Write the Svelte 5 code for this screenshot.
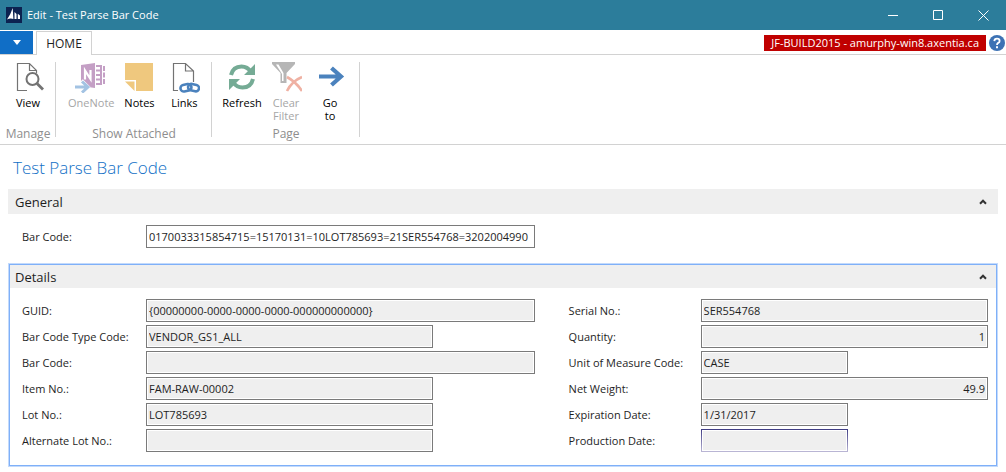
<script lang="ts">
	type Width = 'full' | 'medium' | 'small';

	interface Field {
		id: string;
		label: string;
		value: string;
		width: Width;
		numeric?: boolean;
		active?: boolean;
	}

	let barCode = $state('0170033315854715=15170131=10LOT785693=21SER554768=3202004990');
	let generalOpen = $state(true);
	let detailsOpen = $state(true);

	const leftFields: Field[] = [
		{ id: 'guid', label: 'GUID:', value: '{00000000-0000-0000-0000-000000000000}', width: 'full' },
		{ id: 'type-code', label: 'Bar Code Type Code:', value: 'VENDOR_GS1_ALL', width: 'medium' },
		{ id: 'parsed-code', label: 'Bar Code:', value: '', width: 'full' },
		{ id: 'item-no', label: 'Item No.:', value: 'FAM-RAW-00002', width: 'medium' },
		{ id: 'lot-no', label: 'Lot No.:', value: 'LOT785693', width: 'medium' },
		{ id: 'alt-lot-no', label: 'Alternate Lot No.:', value: '', width: 'medium' }
	];

	const rightFields: Field[] = [
		{ id: 'serial-no', label: 'Serial No.:', value: 'SER554768', width: 'full' },
		{ id: 'quantity', label: 'Quantity:', value: '1', width: 'full', numeric: true },
		{ id: 'uom', label: 'Unit of Measure Code:', value: 'CASE', width: 'small' },
		{ id: 'net-weight', label: 'Net Weight:', value: '49.9', width: 'full', numeric: true },
		{ id: 'expiration', label: 'Expiration Date:', value: '1/31/2017', width: 'small' },
		{ id: 'production', label: 'Production Date:', value: '', width: 'small', active: true }
	];
</script>

{#snippet fieldRow(field: Field)}
	<div class="field">
		<label for={field.id}>{field.label}</label>
		<input
			id={field.id}
			class={field.width}
			class:numeric={field.numeric}
			class:active={field.active}
			type="text"
			value={field.value}
			readonly
		/>
	</div>
{/snippet}

{#snippet chevron(open: boolean)}
	<svg class:closed={!open} width="8" height="6" viewBox="0 0 8 6" aria-hidden="true">
		<path d="M1 4.7 4 1.7 7 4.7" fill="none" stroke="#333" stroke-width="2" />
	</svg>
{/snippet}

<div class="window">
	<header class="title-bar">
		<svg class="app-icon" width="16" height="16" viewBox="0 0 16 16" aria-hidden="true">
			<rect width="16" height="16" fill="#0c2250" />
			<path d="M1 12.500Q4.500 8 6.700 1L7.400 12Q4 11 1 12.500Z" fill="#fff" />
			<path d="M8.500 5 10.500 7V12h-2ZM11.800 6.800l2.200 1.700v3.500h-2.200Z" fill="#fff" />
		</svg>
		<span class="window-title">Edit - Test Parse Bar Code</span>
		<div class="window-buttons">
			<button type="button" aria-label="Minimize">
				<svg width="11" height="11" viewBox="0 0 11 11"><path d="M0 5.5h10" stroke="#fff" /></svg>
			</button>
			<button type="button" aria-label="Maximize">
				<svg width="11" height="11" viewBox="0 0 11 11"><path d="M.5.5h9v9h-9z" fill="none" stroke="#fff" /></svg>
			</button>
			<button type="button" aria-label="Close">
				<svg width="11" height="11" viewBox="0 0 11 11"><path d="m.5.5 10 10m0-10-10 10" stroke="#fff" /></svg>
			</button>
		</div>
	</header>

	<nav class="tab-row">
		<button type="button" class="app-menu" aria-label="Application menu">
			<svg width="8" height="5" viewBox="0 0 8 5"><path d="M0 0h8L4 5z" fill="#fff" /></svg>
		</button>
		<button type="button" class="tab">HOME</button>
		<span class="server">JF-BUILD2015 - amurphy-win8.axentia.ca</span>
		<button type="button" class="help" aria-label="Help">
			<svg width="16" height="16" viewBox="0 0 16 16">
				<circle cx="8" cy="8" r="8" fill="#3d72b4" />
				<path d="M5.300 6.100Q5.400 3.600 8 3.600t2.600 2.300Q10.600 7.200 9.200 7.900 8 8.600 8 10" fill="none" stroke="#fff" stroke-width="1.800" />
				<path d="M7 11.200h2v2H7z" fill="#fff" />
			</svg>
		</button>
	</nav>

	<div class="ribbon">
		<section class="group manage">
			<div class="tools">
				<button type="button">
					<svg width="32" height="32" viewBox="0 0 32 32" aria-hidden="true">
						<path d="M15 29.500H5.500v-27h12l7 7v3M17.500 2.500v7h7" fill="none" stroke="#737373" stroke-width="1.200" />
						<circle cx="20.500" cy="18" r="6" fill="#fff" stroke="#737373" stroke-width="2" />
						<path d="m25 22.500 6 6" stroke="#737373" stroke-width="2.800" />
					</svg>
					View
				</button>
			</div>
			<h2>Manage</h2>
		</section>
		<section class="group attached">
			<div class="tools">
				<button type="button" disabled>
					<svg width="32" height="32" viewBox="0 0 32 32" aria-hidden="true">
						<g fill="#c49fc5">
							<path d="M21 4h6v2h-6zM21 8.500h4v2h-4zM21 13h4v2h-4zM21 17.500h4v2h-4zM21 22h6v2h-6z" />
							<path d="M25 5h2v19h-2zM28 5h2v5h-2zM28 11.500h2v5h-2zM28 18h2v5h-2z" />
							<path d="M6 4 20 2v25L6 25z" />
						</g>
						<path d="M10 18.500V9.500l5.500 8.500V9" fill="none" stroke="#fff" stroke-width="2.200" />
						<path d="M0 26h10M6 20l6 6-6 6" fill="none" stroke="#fff" stroke-width="5" />
						<path d="M0 26h12M7 20.500l6 5.500-6 5.500" fill="none" stroke="#a3c3e3" stroke-width="3" />
					</svg>
					OneNote
				</button>
				<button type="button">
					<svg width="32" height="32" viewBox="0 0 32 32" aria-hidden="true">
						<path d="M2 2h28v28H13V19H2z" fill="#efc87e" />
						<path d="M2 20.500h9.500V30z" fill="#efc87e" />
					</svg>
					Notes
				</button>
				<button type="button">
					<svg width="32" height="32" viewBox="0 0 32 32" aria-hidden="true">
						<path d="M10 29.500H5.500v-27h12l8 7.500v11M17.500 2.500V10h8" fill="none" stroke="#737373" stroke-width="1.200" />
						<g fill="none" stroke="#4b82bd" stroke-width="2.600">
							<rect x="12.500" y="23.500" width="11" height="6.500" rx="3.200" transform="rotate(-12 18 27)" />
							<rect x="20" y="23.500" width="11" height="6.500" rx="3.200" transform="rotate(12 26 27)" />
						</g>
					</svg>
					Links
				</button>
			</div>
			<h2>Show Attached</h2>
		</section>
		<section class="group page">
			<div class="tools">
				<button type="button">
					<svg width="32" height="32" viewBox="0 0 32 32" aria-hidden="true">
						<g fill="none" stroke="#75ab95" stroke-width="4">
							<path d="M5 14Q7 5.500 15.500 5.500q6 0 9.500 5.500" />
							<path d="M27 18q-2 8.500-10.500 8.500-6 0-9.500-5.500" />
						</g>
						<path d="M29 3v11H18zM3 29V18h11z" fill="#75ab95" />
					</svg>
					Refresh
				</button>
				<button type="button" disabled>
					<svg width="32" height="32" viewBox="0 0 32 32" aria-hidden="true">
						<path d="M2 1h23v2l-8.500 9v10h-6V12L2 3z" fill="#b6b6b6" />
						<path d="M6 3.500h2.500l5 8.500v8H12v-7z" fill="#fff" />
						<path d="M17 16q9 5 15 14M32 16q-10 4-15 14" fill="none" stroke="#efb1a3" stroke-width="2.600" />
					</svg>
					Clear<br />Filter
				</button>
				<button type="button">
					<svg width="32" height="32" viewBox="0 0 32 32" aria-hidden="true">
						<path d="M5 15.500h22M17.500 7l9.500 8.500L17.500 24" fill="none" stroke="#4b82bd" stroke-width="4.200" />
					</svg>
					Go<br />to
				</button>
			</div>
			<h2>Page</h2>
		</section>
	</div>

	<main>
		<h1>Test Parse Bar Code</h1>

		<section class="fast-tab">
			<button type="button" class="tab-header" aria-expanded={generalOpen} onclick={() => (generalOpen = !generalOpen)}>
				General
				{@render chevron(generalOpen)}
			</button>
			{#if generalOpen}
				<div class="columns">
					<div class="column">
						<div class="field">
							<label for="bar-code">Bar Code:</label>
							<input id="bar-code" type="text" bind:value={barCode} />
						</div>
					</div>
				</div>
			{/if}
		</section>

		<section class="fast-tab selected">
			<button type="button" class="tab-header" aria-expanded={detailsOpen} onclick={() => (detailsOpen = !detailsOpen)}>
				Details
				{@render chevron(detailsOpen)}
			</button>
			{#if detailsOpen}
				<div class="columns">
					<div class="column">
						{#each leftFields as field (field.id)}
							{@render fieldRow(field)}
						{/each}
					</div>
					<div class="column right">
						{#each rightFields as field (field.id)}
							{@render fieldRow(field)}
						{/each}
					</div>
				</div>
			{/if}
		</section>
	</main>
</div>

<style>
	:global(body) {
		margin: 0;
		background: #fff;
	}

	.window {
		font-family: 'Segoe UI', 'Open Sans', 'Noto Sans', sans-serif;
		font-size: 11px;
		line-height: 16px;
		color: #1e1e1e;
	}

	button,
	input {
		font: inherit;
		color: inherit;
	}

	button {
		padding: 0;
		border: 0;
		background: none;
	}

	.title-bar {
		display: flex;
		align-items: center;
		gap: 5px;
		height: 30px;
		padding-left: 6px;
		background: #2c7d9b;
		color: #fff;
	}

	.window-buttons {
		display: flex;
		align-self: stretch;
		margin-left: auto;
	}

	.window-buttons button {
		display: grid;
		place-items: center;
		width: 45px;
	}

	.tab-row {
		display: flex;
		align-items: center;
		height: 24px;
		padding-top: 1px;
		box-shadow: inset 0 -1px #d2d2d2;
	}

	.app-menu {
		display: grid;
		place-items: center;
		align-self: stretch;
		width: 33px;
		margin-bottom: 1px;
		background: #106ec6;
	}

	.tab {
		align-self: stretch;
		width: 56px;
		margin-left: 3px;
		border: 1px solid #d2d2d2;
		border-bottom: 0;
		background: #fff;
		font-size: 12px;
	}

	.server {
		margin-left: auto;
		padding: 0 7px;
		background: #c00000;
		color: #fff;
		white-space: nowrap;
	}

	.help {
		display: grid;
		margin: 0 1px 0 3px;
	}

	.ribbon {
		display: flex;
		height: 89px;
		border-bottom: 1px solid #d2d2d2;
	}

	.group {
		display: flex;
		flex-direction: column;
		box-sizing: border-box;
		padding: 6px 0 2px;
		background: linear-gradient(#d2d2d2, #d2d2d2) right 7px / 1px calc(100% - 14px) no-repeat;
	}

	.manage {
		width: 56px;
	}

	.attached {
		width: 156px;
	}

	.page {
		width: 148px;
	}

	.tools {
		display: flex;
		flex: 1;
		justify-content: center;
	}

	.attached .tools {
		justify-content: flex-start;
		gap: 1px;
		padding-left: 10px;
	}

	.tools button {
		display: flex;
		flex-direction: column;
		align-items: center;
		box-sizing: border-box;
		min-width: 44px;
		padding: 0 2px;
		line-height: 13px;
		color: #000;
	}

	.tools svg {
		flex: none;
		margin-bottom: 3px;
	}

	.tools button:disabled {
		color: #a6a6a6;
	}

	.group h2 {
		margin: 0;
		font-size: 12px;
		font-weight: 400;
		line-height: 16px;
		text-align: center;
		color: #8e8e8e;
	}

	main {
		padding: 10px 8px 4px;
	}

	h1 {
		margin: 0 0 8px 5px;
		font-size: 17px;
		font-weight: 300;
		line-height: 26px;
		color: #1270c6;
	}

	.tab-header {
		display: flex;
		align-items: center;
		justify-content: space-between;
		width: 100%;
		height: 25px;
		padding: 0 11px 0 7px;
		background: #efefef;
		font-size: 13px;
	}

	.closed {
		transform: rotate(180deg);
	}

	.columns {
		display: grid;
		grid-template-columns: 55fr 45fr;
		gap: 34px;
		padding: 11px 10px 15px 14px;
	}

	.column {
		display: grid;
		gap: 3px;
	}

	.field {
		display: grid;
		grid-template-columns: 124px 1fr;
		align-items: center;
	}

	.right .field {
		grid-template-columns: 132px 1fr;
	}

	.field label {
		white-space: nowrap;
	}

	.field input {
		box-sizing: border-box;
		width: 100%;
		height: 23px;
		padding: 0 2px;
		border: 1px solid #7a7a7a;
		border-radius: 0;
		background: #fff;
		outline: 0;
	}

	.field input[readonly] {
		background: #efefef;
		box-shadow: inset 0 0 0 1px #fff;
	}

	.field .medium {
		width: 287px;
	}

	.field .small {
		width: 147px;
	}

	.field .numeric {
		text-align: right;
	}

	.field .active {
		border-image: linear-gradient(#3d3a82, #bcb8d6) 1;
	}

	.selected {
		margin: 1px 1px 0;
		border: 1px solid #7fb0f8;
		box-shadow: 0 0 0 1px #c3dafc;
	}

	.selected .tab-header {
		height: 23px;
		padding: 0 9px 0 5px;
	}

	.selected .columns {
		padding: 11px 8px 13px 12px;
	}
</style>
